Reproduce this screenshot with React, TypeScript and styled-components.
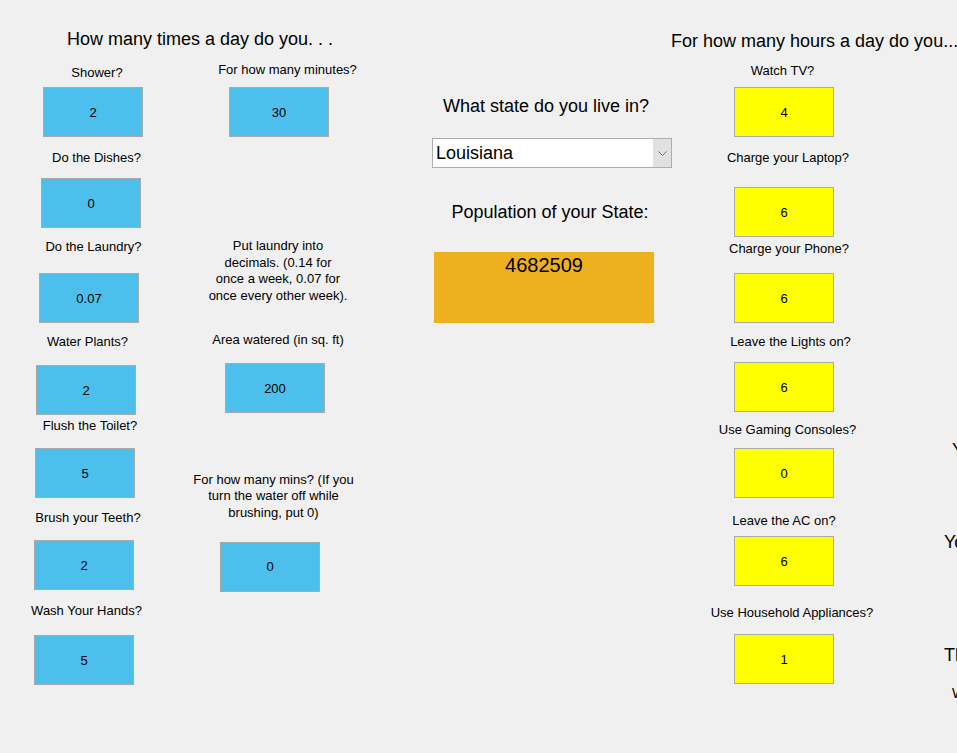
import React from "react";
import styled, { createGlobalStyle } from "styled-components";

const GlobalStyle = createGlobalStyle`
  html, body {
    margin: 0;
    padding: 0;
    background: #f0f0f0;
    overflow: hidden;
  }
  body {
    font-family: "Liberation Sans", Arial, sans-serif;
    color: #000;
  }
`;

const Page = styled.div`
  display: flex;
  flex-direction: row;
  align-items: flex-start;
  width: 957px;
  height: 753px;
  overflow: hidden;
  background: #f0f0f0;
`;

const Section = styled.section<{ $w: number }>`
  display: flex;
  flex-direction: column;
  align-items: flex-start;
  flex: 0 0 ${(p) => p.$w}px;
  width: ${(p) => p.$w}px;
`;

const Columns = styled.div`
  display: flex;
  flex-direction: row;
  align-items: flex-start;
`;

const Column = styled.div<{ $w: number }>`
  display: flex;
  flex-direction: column;
  align-items: flex-start;
  flex: 0 0 ${(p) => p.$w}px;
  width: ${(p) => p.$w}px;
`;

const Heading = styled.h2<{ $cx?: number; $mt: number; $left?: number }>`
  margin: ${(p) => p.$mt}px 0 0
    ${(p) => (p.$cx !== undefined ? p.$cx - 200 : p.$left ?? 0)}px;
  width: ${(p) => (p.$cx !== undefined ? "400px" : "auto")};
  text-align: ${(p) => (p.$cx !== undefined ? "center" : "left")};
  font-size: 18px;
  line-height: 22px;
  font-weight: normal;
  white-space: nowrap;
`;

const Field = styled.div<{ $mt: number }>`
  display: flex;
  flex-direction: column;
  align-items: flex-start;
  margin-top: ${(p) => p.$mt}px;
`;

const Label = styled.div<{ $cx: number; $lh?: number }>`
  width: 200px;
  margin-left: ${(p) => p.$cx - 100}px;
  text-align: center;
  font-size: 13px;
  line-height: ${(p) => p.$lh ?? 16}px;
  white-space: nowrap;
`;

const ValueBox = styled.div<{ $x: number; $gap: number; $tone: "blue" | "yellow" }>`
  box-sizing: border-box;
  width: 100px;
  height: 50px;
  margin-top: ${(p) => p.$gap}px;
  margin-left: ${(p) => p.$x}px;
  display: flex;
  align-items: center;
  justify-content: center;
  background: ${(p) => (p.$tone === "blue" ? "#4dbfec" : "#ffff00")};
  border: 1px solid #a9a9a9;
  font-size: 13px;
`;

const Select = styled.div`
  box-sizing: border-box;
  display: flex;
  align-items: stretch;
  width: 240px;
  height: 30px;
  margin: 21px 0 0 32px;
  background: #fff;
  border: 1px solid #adadad;
`;

const SelectText = styled.span`
  flex: 1;
  padding-left: 3px;
  font-size: 18px;
  line-height: 28px;
`;

const SelectArrow = styled.span`
  display: flex;
  align-items: center;
  justify-content: center;
  width: 18px;
  background: #e1e1e1;
`;

const PopulationBox = styled.div`
  width: 220px;
  height: 71px;
  margin: 29px 0 0 34px;
  background: #edb120;
  text-align: center;
  font-size: 20px;
  line-height: 23px;
  padding-top: 2px;
  box-sizing: border-box;
`;

const Clipped = styled.div<{ $mt: number; $x: number; $size: number }>`
  margin: ${(p) => p.$mt}px 0 0 ${(p) => p.$x}px;
  font-size: ${(p) => p.$size}px;
  line-height: ${(p) => Math.round(p.$size * 1.22)}px;
  white-space: nowrap;
`;

type F = {
  label: React.ReactNode;
  cx: number;
  mt: number;
  gap: number;
  x: number;
  value: string;
  lh?: number;
};

const col1: F[] = [
  { label: "Shower?", cx: 97, mt: 15, gap: 6, x: 43, value: "2" },
  { label: "Do the Dishes?", cx: 96.5, mt: 13, gap: 12, x: 41, value: "0" },
  { label: "Do the Laundry?", cx: 93.5, mt: 11, gap: 18, x: 39, value: "0.07" },
  { label: "Water Plants?", cx: 87.5, mt: 11, gap: 15, x: 36, value: "2" },
  { label: "Flush the Toilet?", cx: 90, mt: 3, gap: 14, x: 35, value: "5" },
  { label: "Brush your Teeth?", cx: 88, mt: 12, gap: 14, x: 34, value: "2" },
  { label: "Wash Your Hands?", cx: 86.5, mt: 13, gap: 16, x: 34, value: "5" },
];

const right: F[] = [
  { label: "Watch TV?", cx: 111.5, mt: 11, gap: 8, x: 63, value: "4" },
  { label: "Charge your Laptop?", cx: 117, mt: 13, gap: 21, x: 63, value: "6" },
  { label: "Charge your Phone?", cx: 118, mt: 4, gap: 16, x: 63, value: "6" },
  { label: "Leave the Lights on?", cx: 119.5, mt: 11, gap: 12, x: 63, value: "6" },
  { label: "Use Gaming Consoles?", cx: 116.5, mt: 10, gap: 10, x: 63, value: "0" },
  { label: "Leave the AC on?", cx: 113, mt: 15, gap: 7, x: 63, value: "6" },
  { label: "Use Household Appliances?", cx: 121, mt: 19, gap: 13, x: 63, value: "1" },
];

const renderFields = (fields: F[], tone: "blue" | "yellow") =>
  fields.map((f, i) => (
    <Field key={i} $mt={f.mt}>
      <Label $cx={f.cx} $lh={f.lh}>
        {f.label}
      </Label>
      <ValueBox $x={f.x} $gap={f.gap} $tone={tone}>
        {f.value}
      </ValueBox>
    </Field>
  ));

const Chevron = () => (
  <svg width="9" height="5" viewBox="0 0 9 5">
    <polyline points="0.5,0.5 4.5,4.5 8.5,0.5" fill="none" stroke="#707070" strokeWidth="1" />
  </svg>
);

export default function App() {
  return (
    <>
      <GlobalStyle />
      <Page>
        <Section $w={400}>
          <Heading $cx={200} $mt={28}>
            How many times a day do you. . .
          </Heading>
          <Columns>
            <Column $w={190}>{renderFields(col1, "blue")}</Column>
            <Column $w={210}>
              <Field $mt={12}>
                <Label $cx={97.5}>For how many minutes?</Label>
                <ValueBox $x={39} $gap={9} $tone="blue">
                  30
                </ValueBox>
              </Field>
              <Field $mt={101}>
                <Label $cx={88} $lh={16.5}>
                  Put laundry into
                  <br />
                  decimals. (0.14 for
                  <br />
                  once a week, 0.07 for
                  <br />
                  once every other week).
                </Label>
              </Field>
              <Field $mt={28}>
                <Label $cx={88}>Area watered (in sq. ft)</Label>
                <ValueBox $x={35} $gap={15} $tone="blue">
                  200
                </ValueBox>
              </Field>
              <Field $mt={59}>
                <Label $cx={83.5} $lh={16.3}>
                  For how many mins? (If you
                  <br />
                  turn the water off while
                  <br />
                  brushing, put 0)
                </Label>
                <ValueBox $x={30} $gap={21} $tone="blue">
                  0
                </ValueBox>
              </Field>
            </Column>
          </Columns>
        </Section>

        <Section $w={271}>
          <Heading $cx={146} $mt={95}>
            What state do you live in?
          </Heading>
          <Select>
            <SelectText>Louisiana</SelectText>
            <SelectArrow>
              <Chevron />
            </SelectArrow>
          </Select>
          <Heading $cx={150} $mt={33}>
            Population of your State:
          </Heading>
          <PopulationBox>4682509</PopulationBox>
        </Section>

        <Section $w={273}>
          <Heading $mt={30} $left={0}>
            For how many hours a day do you...
          </Heading>
          {renderFields(right, "yellow")}
        </Section>

        <Section $w={13}>
          <Clipped $mt={439} $x={8} $size={18}>
            Your water usage is:
          </Clipped>
          <Clipped $mt={70} $x={0} $size={18}>
            Your energy usage is:
          </Clipped>
          <Clipped $mt={91} $x={0} $size={18}>
            The average person uses
          </Clipped>
          <Clipped $mt={19} $x={8} $size={14}>
            Which is
          </Clipped>
        </Section>
      </Page>
    </>
  );
}
